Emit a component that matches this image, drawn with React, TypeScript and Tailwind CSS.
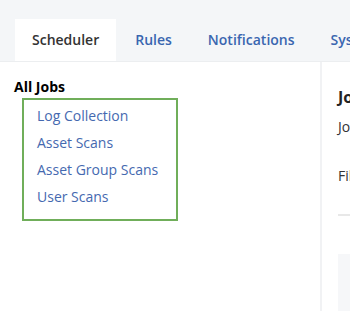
import React from 'react';

export default function App() {
  const tabs = ['Scheduler', 'Rules', 'Notifications', 'System Settings'];
  const jobs = ['Log Collection', 'Asset Scans', 'Asset Group Scans', 'User Scans'];

  return (
    <div className="w-[350px] h-[311px] overflow-hidden bg-white font-['Open_Sans',sans-serif]">
      <div className="h-[62px] bg-[#f4f6f8] border-b border-[#eceef0] flex items-end pl-[15px] gap-[2px] whitespace-nowrap">
        {tabs.map((t, i) => (
          <div
            key={t}
            className={`h-[42px] px-[17px] pb-[2px] flex items-center text-[14px] font-semibold ${
              i === 0 ? 'bg-white text-[#333333]' : 'text-[#3a66b0]'
            }`}
          >
            {t}
          </div>
        ))}
      </div>
      <div className="flex h-[249px]">
        <div className="w-[320px] shrink-0 pl-[14px] pt-[16px]">
          <div className="text-[14px] font-bold text-black leading-[18px]">All Jobs</div>
          <div className="ml-[8px] mt-[2px] w-[156px] h-[123px] border-2 border-[#70ae5a] pl-[13px] pt-[2px]">
            {jobs.map((j) => (
              <div key={j} className="h-[27px] flex items-center text-[14px] text-[#4569b0]">
                {j}
              </div>
            ))}
          </div>
        </div>
        <div className="w-[2px] shrink-0 bg-[#f1f2f4]" />
        <div className="flex-1 pl-[16px] whitespace-nowrap">
          <div className="mt-[25px] text-[16px] font-bold text-[#222222] leading-[20px]">Job Details</div>
          <div className="mt-[10px] text-[14px] text-[#333333] leading-[20px]">Job Name</div>
          <div className="mt-[29px] text-[14px] text-[#333333] leading-[20px]">Filters</div>
          <div className="mt-[28px] h-[2px] bg-[#e8e8e8]" />
          <div className="mt-[38px] h-[60px] bg-[#f6f7f9]" />
        </div>
      </div>
    </div>
  );
}
